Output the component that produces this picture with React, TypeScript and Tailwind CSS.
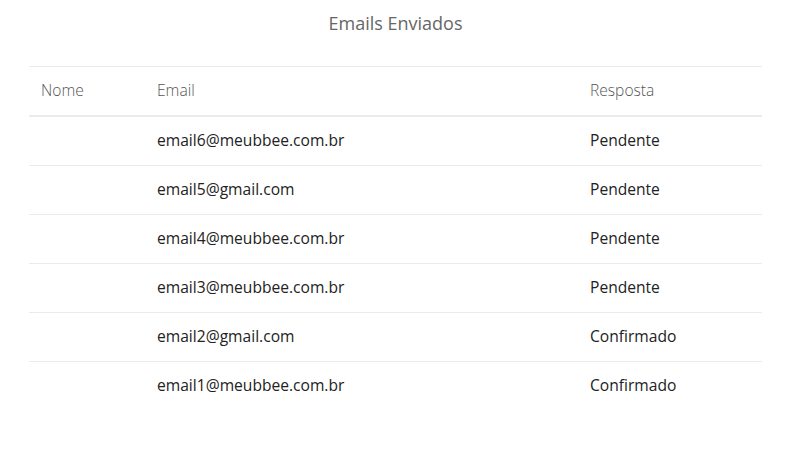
import React from "react";

const rows = [
  { nome: "", email: "email6@meubbee.com.br", resposta: "Pendente" },
  { nome: "", email: "email5@gmail.com", resposta: "Pendente" },
  { nome: "", email: "email4@meubbee.com.br", resposta: "Pendente" },
  { nome: "", email: "email3@meubbee.com.br", resposta: "Pendente" },
  { nome: "", email: "email2@gmail.com", resposta: "Confirmado" },
  { nome: "", email: "email1@meubbee.com.br", resposta: "Confirmado" },
];

export default function App() {
  return (
    <div className="min-h-screen bg-white px-[29px] font-['Open_Sans','Liberation_Sans',sans-serif]">
      <h2 className="pt-[11px] text-center text-[18px] leading-[24px] text-[#666]">
        Emails Enviados
      </h2>

      <table className="mt-[31px] w-full border-collapse text-[15.6px] leading-[24px]">
        <thead>
          <tr className="border-t border-b-2 border-[#e9ecef]">
            <th className="w-[116px] px-3 pt-[11px] pb-[13px] text-left font-light text-[#555]">Nome</th>
            <th className="px-3 pt-[11px] pb-[13px] text-left font-light text-[#555]">Email</th>
            <th className="w-[184px] px-3 pt-[11px] pb-[13px] text-left font-light text-[#555]">Resposta</th>
          </tr>
        </thead>
        <tbody>
          {rows.map((r, i) => (
            <tr key={i} className={i > 0 ? "border-t border-[#e9ecef]" : ""}>
              <td className="px-3 pt-[11px] pb-[13px] text-[#222]">{r.nome}</td>
              <td className="px-3 pt-[11px] pb-[13px] text-[#222]">{r.email}</td>
              <td className="px-3 pt-[11px] pb-[13px] text-[#222]">{r.resposta}</td>
            </tr>
          ))}
        </tbody>
      </table>
    </div>
  );
}
